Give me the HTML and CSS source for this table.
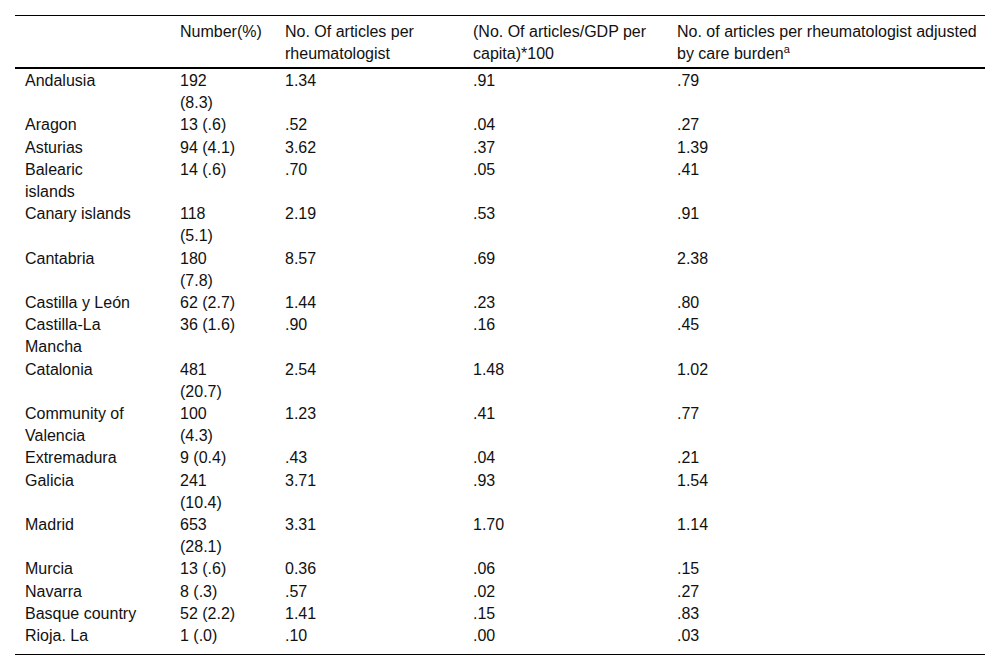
FILE: index.html
```html
<!DOCTYPE html>
<html>
<head>
<meta charset="utf-8">
<link rel="stylesheet" href="styles.css">
</head>
<body>
<table class="data">
  <colgroup>
    <col class="c1"><col class="c2"><col class="c3"><col class="c4"><col class="c5">
  </colgroup>
  <thead>
    <tr>
      <th></th>
      <th>Number(%)</th>
      <th>No. Of articles per<br>rheumatologist</th>
      <th>(No. Of articles/GDP per<br>capita)*100</th>
      <th>No. of articles per rheumatologist adjusted<br>by care burden<sup>a</sup></th>
    </tr>
  </thead>
  <tbody>
    <tr><td>Andalusia</td><td>192<br>(8.3)</td><td>1.34</td><td>.91</td><td>.79</td></tr>
    <tr><td>Aragon</td><td>13 (.6)</td><td>.52</td><td>.04</td><td>.27</td></tr>
    <tr><td>Asturias</td><td>94 (4.1)</td><td>3.62</td><td>.37</td><td>1.39</td></tr>
    <tr><td>Balearic<br>islands</td><td>14 (.6)</td><td>.70</td><td>.05</td><td>.41</td></tr>
    <tr><td>Canary islands</td><td>118<br>(5.1)</td><td>2.19</td><td>.53</td><td>.91</td></tr>
    <tr><td>Cantabria</td><td>180<br>(7.8)</td><td>8.57</td><td>.69</td><td>2.38</td></tr>
    <tr><td>Castilla y León</td><td>62 (2.7)</td><td>1.44</td><td>.23</td><td>.80</td></tr>
    <tr><td>Castilla-La<br>Mancha</td><td>36 (1.6)</td><td>.90</td><td>.16</td><td>.45</td></tr>
    <tr><td>Catalonia</td><td>481<br>(20.7)</td><td>2.54</td><td>1.48</td><td>1.02</td></tr>
    <tr><td>Community of<br>Valencia</td><td>100<br>(4.3)</td><td>1.23</td><td>.41</td><td>.77</td></tr>
    <tr><td>Extremadura</td><td>9 (0.4)</td><td>.43</td><td>.04</td><td>.21</td></tr>
    <tr><td>Galicia</td><td>241<br>(10.4)</td><td>3.71</td><td>.93</td><td>1.54</td></tr>
    <tr><td>Madrid</td><td>653<br>(28.1)</td><td>3.31</td><td>1.70</td><td>1.14</td></tr>
    <tr><td>Murcia</td><td>13 (.6)</td><td>0.36</td><td>.06</td><td>.15</td></tr>
    <tr><td>Navarra</td><td>8 (.3)</td><td>.57</td><td>.02</td><td>.27</td></tr>
    <tr><td>Basque country</td><td>52 (2.2)</td><td>1.41</td><td>.15</td><td>.83</td></tr>
    <tr><td>Rioja. La</td><td>1 (.0)</td><td>.10</td><td>.00</td><td>.03</td></tr>
  </tbody>
</table>
</body>
</html>
```

FILE: styles.css
```css
html, body {
  margin: 0;
  padding: 0;
  background: #ffffff;
}

body {
  padding: 15px 15px 0 15px;
  font-family: "Liberation Sans", Arial, Helvetica, sans-serif;
  font-size: 16px;
  color: #111111;
}

.data {
  width: 970px;
  border-collapse: collapse;
  table-layout: fixed;
  border-top: 1px solid #000;
  border-bottom: 1px solid #000;
}

.c1 { width: 155px; }
.c2 { width: 105px; }
.c3 { width: 188px; }
.c4 { width: 204px; }
.c5 { width: 318px; }

.data th,
.data td {
  text-align: left;
  vertical-align: top;
  font-weight: normal;
  line-height: 22.2px;
  padding: 0 4px 0 10px;
  white-space: nowrap;
}

.data thead th {
  line-height: 22px;
  padding-top: 5px;
  padding-bottom: 2px;
  border-bottom: 2px solid #000;
}

.data tbody tr:first-child td {
  padding-top: 1px;
}

.data tbody tr:last-child td {
  padding-bottom: 7px;
}

.data sup {
  font-size: 11px;
  line-height: 0;
  vertical-align: 6px;
}
```
